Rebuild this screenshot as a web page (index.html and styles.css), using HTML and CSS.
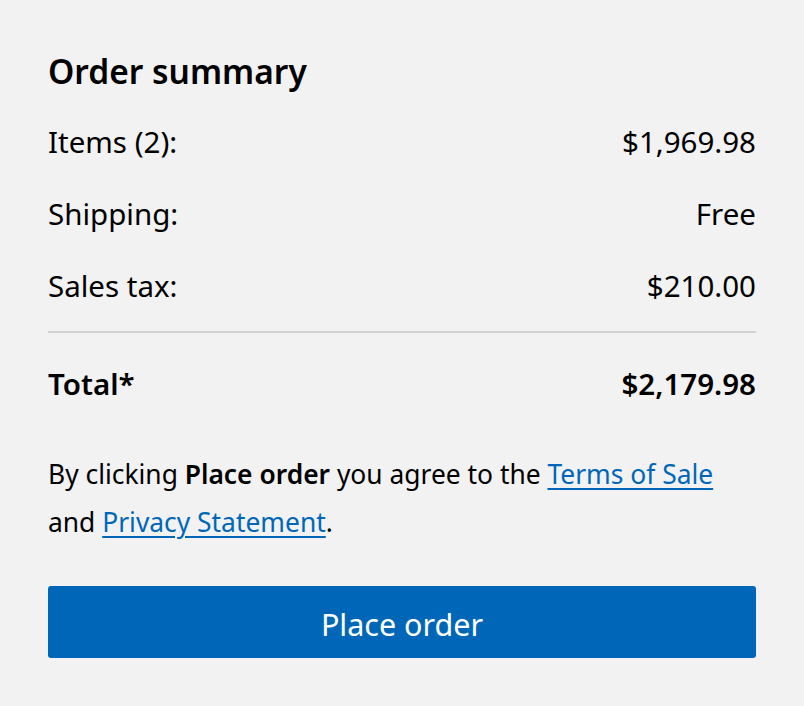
FILE: index.html
```html
<!DOCTYPE html>
<html lang="en">
<head>
<meta charset="utf-8">
<title>Order summary</title>
<link rel="stylesheet" href="styles.css">
</head>
<body>
<section class="summary">
  <h2 class="title">Order summary</h2>
  <div class="row"><span>Items (2):</span><span>$1,969.98</span></div>
  <div class="row"><span>Shipping:</span><span>Free</span></div>
  <div class="row"><span>Sales tax:</span><span>$210.00</span></div>
  <hr class="divider">
  <div class="row total"><span>Total*</span><span>$2,179.98</span></div>
  <p class="legal">By clicking <strong>Place order</strong> you agree to the <a href="#">Terms of Sale</a> and <a href="#">Privacy Statement</a>.</p>
  <button class="place" type="button">Place order</button>
</section>
</body>
</html>
```
FILE: styles.css
```css
html, body {
  margin: 0;
  padding: 0;
  background: #f2f2f2;
}
body {
  font-family: "Noto Sans", "Open Sans", sans-serif;
  color: #000;
}
.summary {
  padding: 47px 48px 0 48px;
  display: flex;
  flex-direction: column;
}
.title {
  margin: 0;
  font-size: 33.5px;
  font-weight: 600;
  line-height: 48px;
  height: 48px;
  margin-bottom: 11px;
}
.row {
  display: flex;
  justify-content: space-between;
  align-items: center;
  height: 72px;
  font-size: 29.5px;
  line-height: 40px;
}
.divider {
  margin: 9px 0 15px 0;
  border: 0;
  height: 2px;
  background: #d2d2d2;
}
.total {
  font-weight: 600;
}
.legal {
  margin: 30px 0 0 0;
  font-size: 26.4px;
  line-height: 48px;
}
.legal strong {
  font-weight: 600;
}
.legal a {
  color: #0067b8;
  text-decoration: underline;
  text-decoration-thickness: 2px;
  text-underline-offset: 4px;
}
.place {
  margin-top: 40px;
  height: 72px;
  padding: 3px 0 0 0;
  border: 0;
  border-radius: 3px;
  background: #0067b8;
  color: #fff;
  font-family: inherit;
  font-size: 30.5px;
  cursor: pointer;
}
```
